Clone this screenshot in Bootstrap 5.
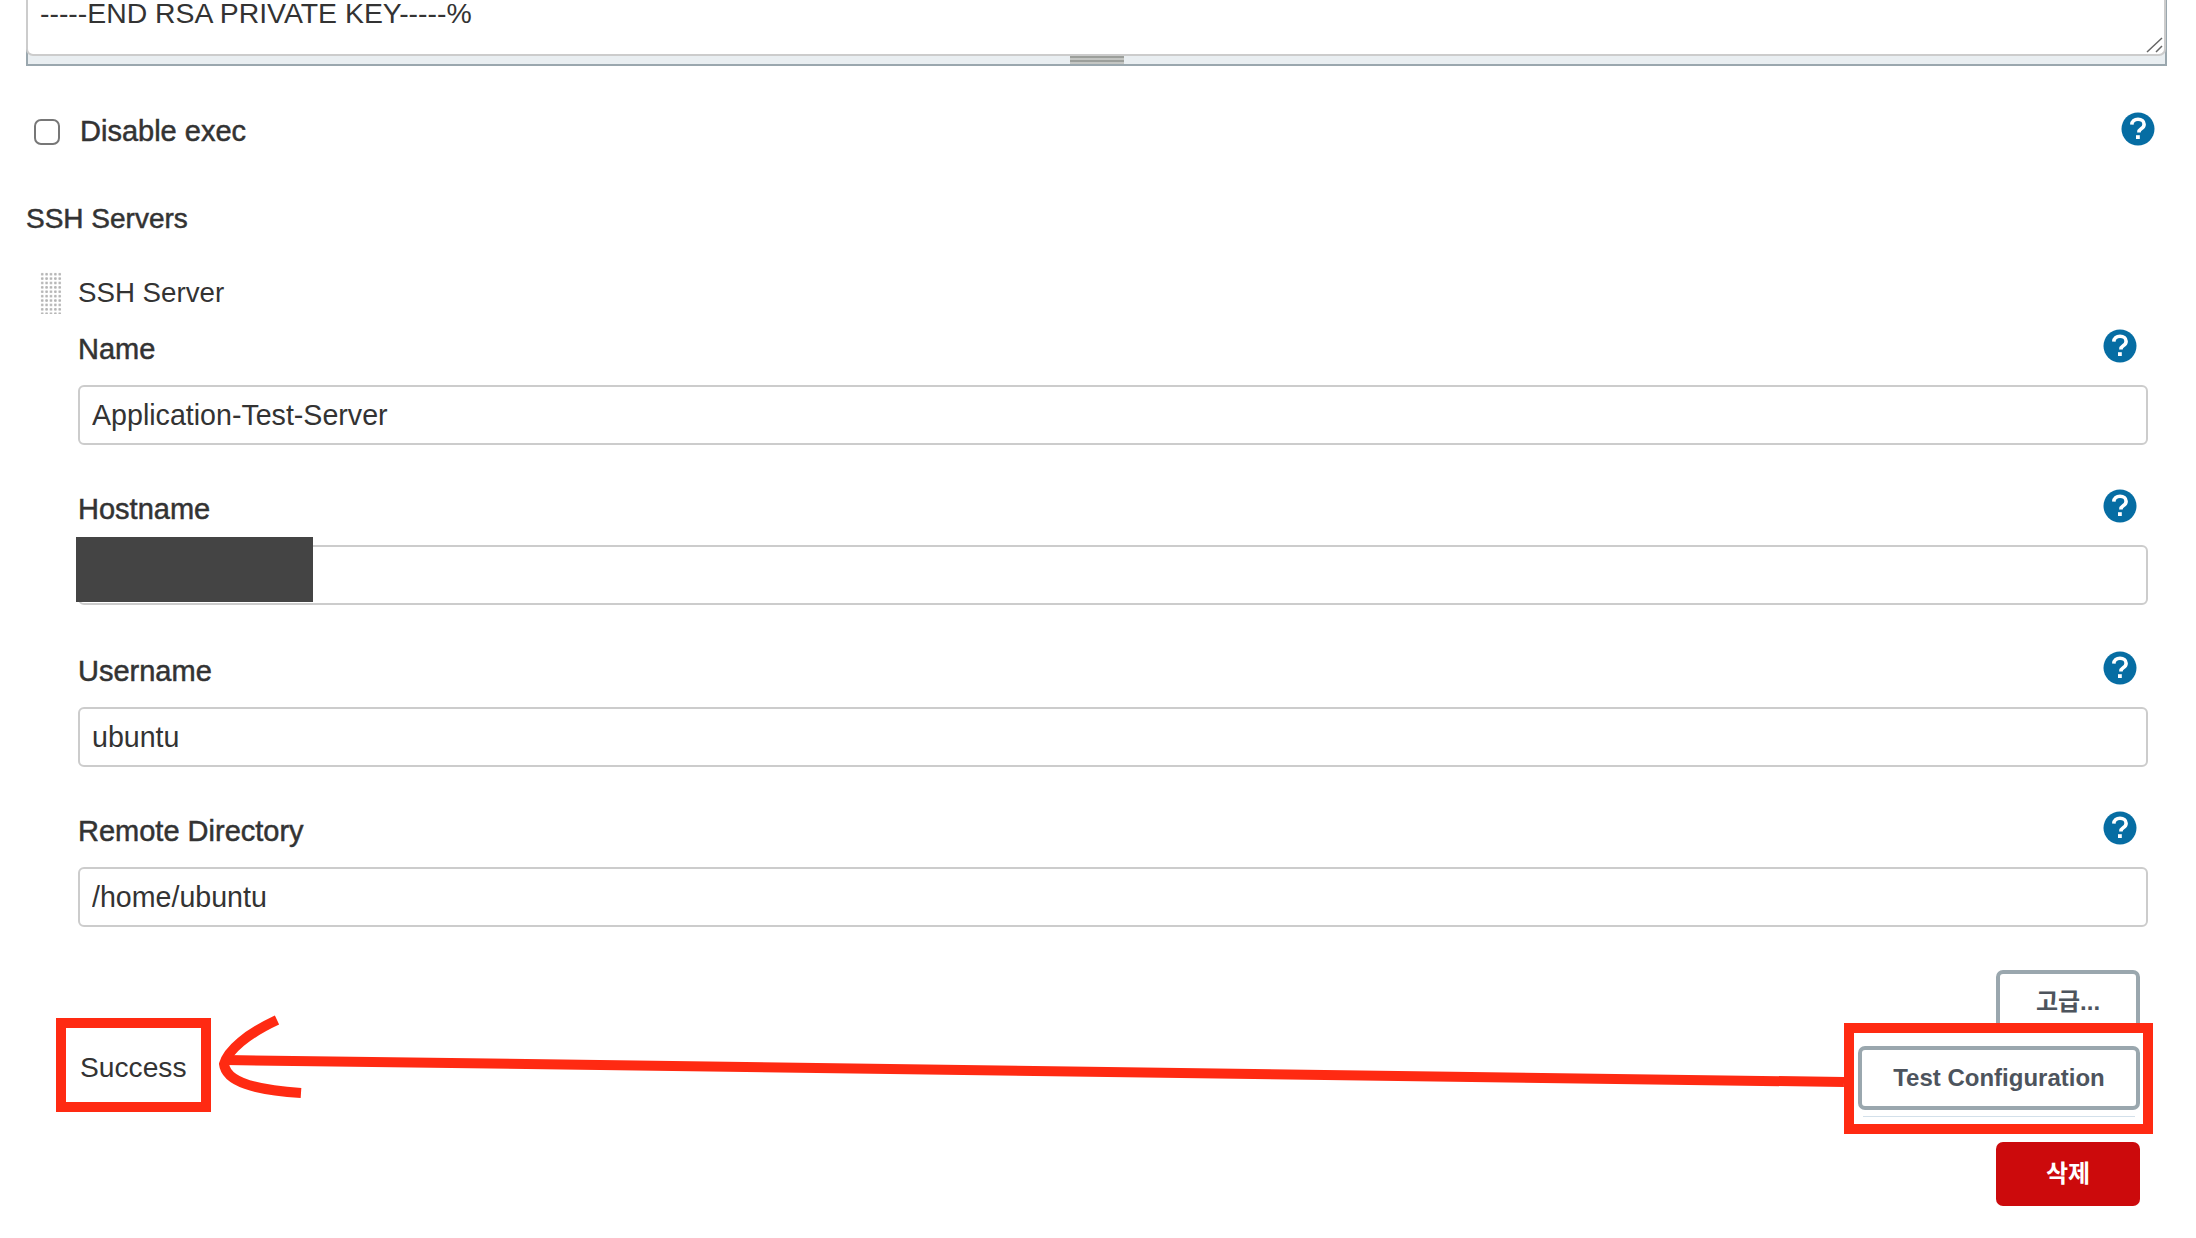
<!DOCTYPE html>
<html lang="ko">
<head>
  <meta charset="UTF-8">
  <meta name="viewport" content="width=device-width, initial-scale=1">
  <title>SSH Servers</title>
  <link href="https://cdn.jsdelivr.net/npm/bootstrap@5.3.3/dist/css/bootstrap.min.css" rel="stylesheet">
  <style>
    body { font-family: "Liberation Sans", "Noto Sans CJK KR", sans-serif; font-size: 28px; color: #333; background: #fff; overflow: hidden; }
    .page-wrap { position: relative; width: 2196px; height: 1238px; padding: 0 30px 0 26px; }
    .key-box { height: 66px; background: #e9eef1; border: 2px solid #9aa7ae; border-top: 0; position: relative; margin-right: -1px; }
    .key-text { display: block; height: 56px; margin: 0 0 0 -2px; width: calc(100% + 3px); padding: 0 12px; font-size: 28.4px; line-height: 27px; color: #333; background: #fff; border: 2px solid #ccc; border-top: 0; border-radius: 0 0 7px 7px; outline: 0; overflow: hidden; resize: none; }
    .grip-bar { position: absolute; left: 1042px; bottom: 0; width: 54px; height: 8px; background: repeating-linear-gradient(#9c9f9b 0 2px, #c4c6c3 2px 4px); }
    .resize-mark { position: absolute; right: 1px; top: 36px; }
    .exec-row { height: 40px; margin-top: 46px; padding: 0 11px 0 8px; }
    .exec-row svg { margin-bottom: 6px; }
    .exec-check { width: 26px; height: 26px; margin: 0 20px 0 0; border: 2px solid #777; border-radius: 5px; }
    .strong-label { font-size: 29px; margin: 0; -webkit-text-stroke: .5px #333; }
    .group-title { margin-top: 50px; height: 34px; line-height: 34px; font-size: 28px; }
    .server-head { margin-top: 36px; height: 42px; font-size: 27.7px; }
    .drag-dots { width: 22px; height: 42px; margin: 0 16px 0 14px; background-image: radial-gradient(circle, #b5b5b5 1px, transparent 1.7px); background-size: 4.4px 4.4px; }
    .field-list { padding: 0 18px 0 52px; }
    .field-item { padding-top: 19px; }
    .field-item + .field-item { padding-top: 48px; }
    .field-item:nth-child(3) { padding-top: 50px; }
    .field-head { height: 34px; padding-right: 11px; }
    .field-head svg { margin-bottom: 8px; }
    .field-input { height: 60px; margin-top: 18px; padding: 0 12px; font-size: 28.6px; color: #333; border: 2px solid #ccc; border-radius: 6px; }
    .field-input:focus { border-color: #ccc; box-shadow: none; }
    .mask-wrap { position: relative; }
    .mask-block { position: absolute; left: -2px; top: -8px; width: 237px; height: 65px; background: #444; }
    .action-col { padding: 43px 8px 0 0; }
    .action-btn { height: 63px; width: 144px; padding: 0; font-size: 24px; font-weight: 700; color: #4d545d; background: #fff; border: 4px solid #9aa7ae; border-radius: 7px; }
    .test-row { position: relative; margin-top: 13px; }
    .test-btn { width: 282px; height: 64px; }
    .test-line { position: absolute; right: 5px; bottom: -7px; width: 272px; height: 1px; background: #d3e0ea; }
    .result-text { position: absolute; left: 2px; top: 0; font-size: 28.2px; }
    .danger-btn { margin-top: 32px; height: 64px; color: #fff; background: #cc0a0c; border: 0; }
    .mark-layer { position: absolute; left: 0; top: 0; pointer-events: none; }
  </style>
</head>
<body>
  <div class="page-wrap">
    <div class="key-box">
      <textarea class="key-text" spellcheck="false">-----END RSA PRIVATE KEY-----%</textarea>
      <svg class="resize-mark" width="18" height="18" viewBox="0 0 18 18" fill="none" stroke="#666" stroke-width="1.500"><path d="M1 16L16 2M10 16L16 10"/></svg>
      <div class="grip-bar"></div>
    </div>

    <div class="exec-row d-flex align-items-center">
      <input class="form-check-input exec-check" type="checkbox" id="disableExec">
      <label class="strong-label flex-grow-1" for="disableExec">Disable exec</label>
      <svg width="34" height="34" viewBox="0 0 34 34"><use href="#helpIcon"/></svg>
    </div>

    <div class="group-title strong-label">SSH Servers</div>

    <div class="server-head d-flex align-items-center">
      <div class="drag-dots"></div>
      <span>SSH Server</span>
    </div>

    <div class="field-list">
      <div class="field-item">
        <div class="field-head d-flex justify-content-between align-items-center">
          <label class="strong-label">Name</label>
          <svg width="34" height="34" viewBox="0 0 34 34"><use href="#helpIcon"/></svg>
        </div>
        <input class="form-control field-input" type="text" value="Application-Test-Server">
      </div>
      <div class="field-item">
        <div class="field-head d-flex justify-content-between align-items-center">
          <label class="strong-label">Hostname</label>
          <svg width="34" height="34" viewBox="0 0 34 34"><use href="#helpIcon"/></svg>
        </div>
        <div class="mask-wrap">
          <input class="form-control field-input" type="text" value="">
          <div class="mask-block"></div>
        </div>
      </div>
      <div class="field-item">
        <div class="field-head d-flex justify-content-between align-items-center">
          <label class="strong-label">Username</label>
          <svg width="34" height="34" viewBox="0 0 34 34"><use href="#helpIcon"/></svg>
        </div>
        <input class="form-control field-input" type="text" value="ubuntu">
      </div>
      <div class="field-item">
        <div class="field-head d-flex justify-content-between align-items-center">
          <label class="strong-label">Remote Directory</label>
          <svg width="34" height="34" viewBox="0 0 34 34"><use href="#helpIcon"/></svg>
        </div>
        <input class="form-control field-input" type="text" value="/home/ubuntu">
      </div>

      <div class="action-col d-flex flex-column align-items-end">
        <button class="btn action-btn" type="button">고급...</button>
        <div class="test-row align-self-stretch d-flex justify-content-end">
          <span class="result-text">Success</span>
          <button class="btn action-btn test-btn" type="button">Test Configuration</button>
          <div class="test-line"></div>
        </div>
        <button class="btn action-btn danger-btn" type="button">삭제</button>
      </div>
    </div>

    <!-- red annotations drawn over the screenshot -->
    <svg class="mark-layer" width="2196" height="1238" viewBox="0 0 2196 1238" fill="none" stroke="#ff2a12" stroke-width="10">
      <rect x="61" y="1023" width="145" height="84"/>
      <rect x="1849" y="1028" width="299" height="101"/>
      <path d="M1844 1082L226 1060"/>
      <path d="M277 1020C247 1034 228 1050 224 1064C226 1082 255 1090 301 1093"/>
    </svg>

    <svg width="0" height="0" class="position-absolute">
      <symbol id="helpIcon" viewBox="0 0 34 34">
        <circle cx="17" cy="17" r="16.500" fill="#066da3"/>
        <path d="M10.800 12.600c.2-3.400 2.700-5.400 6.200-5.400 3.600 0 6.100 2 6.100 5 0 2.300-1.200 3.500-2.900 4.600-1.600 1-2.300 1.800-2.300 3.600" fill="none" stroke="#fff" stroke-width="3.600"/>
        <rect x="15" y="23.200" width="3.800" height="3.800" fill="#fff"/>
      </symbol>
    </svg>
  </div>
  <script src="https://cdn.jsdelivr.net/npm/bootstrap@5.3.3/dist/js/bootstrap.bundle.min.js"></script>
</body>
</html>
